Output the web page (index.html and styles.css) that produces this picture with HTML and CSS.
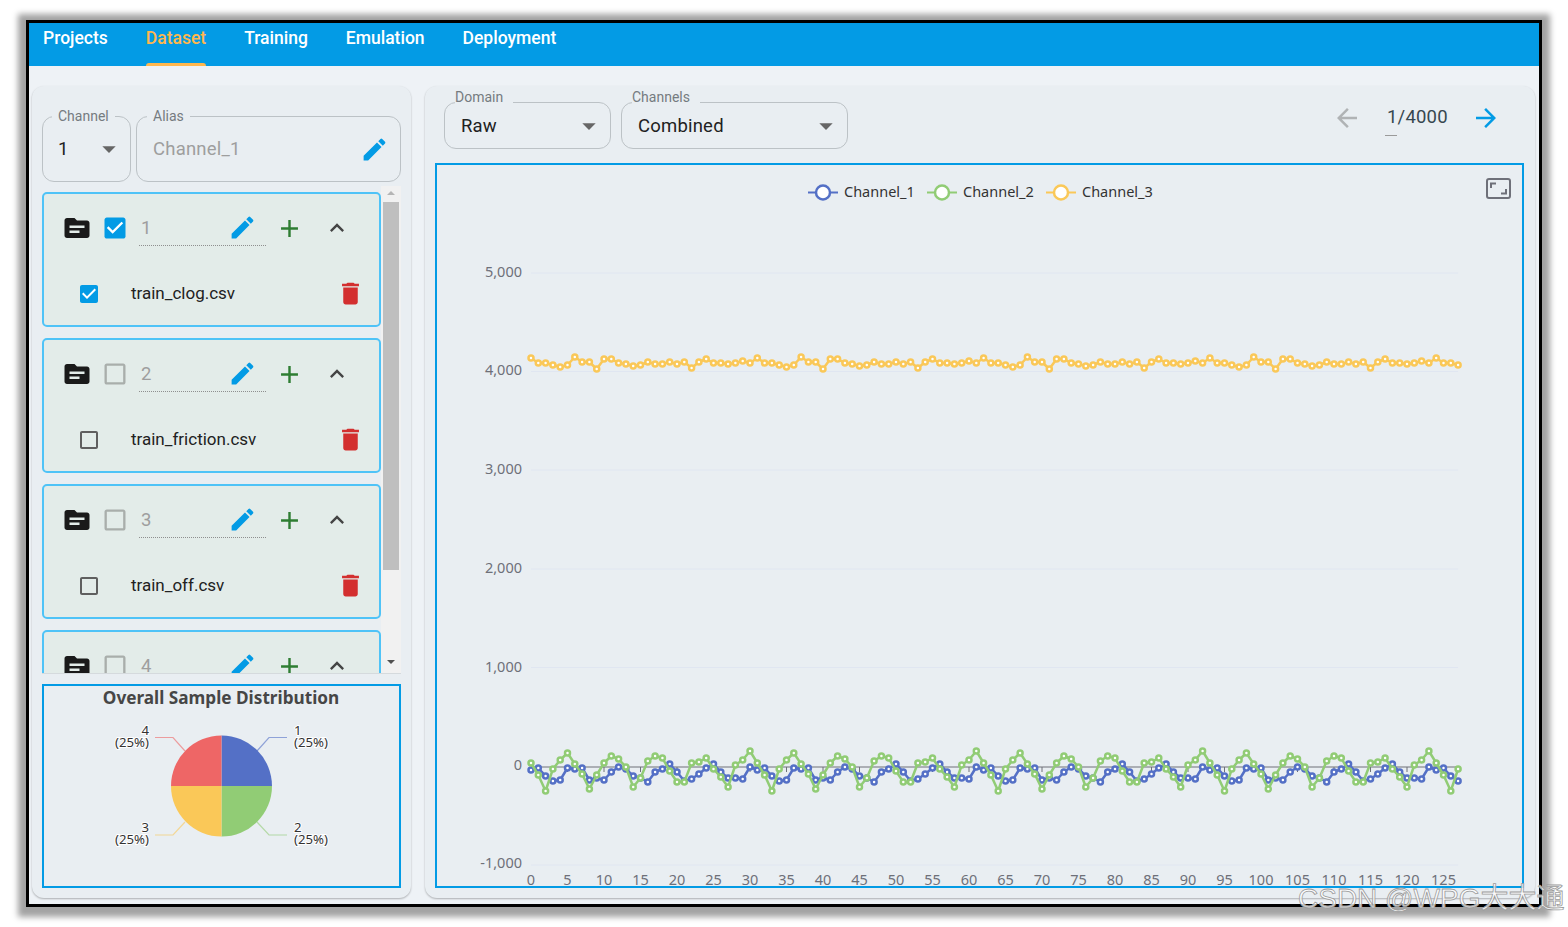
FILE: index.html
```html
<!DOCTYPE html>
<html lang="en">
<head>
<meta charset="utf-8">
<title>Dataset</title>
<link rel="stylesheet" href="styles.css">
<script src="chart.js" defer></script>
</head>
<body>
<svg class="defs" width="0" height="0" aria-hidden="true">
  <defs>
    <symbol id="i-folder" viewBox="0 0 24 24"><path d="M20 6h-8l-2-2H4c-1.1 0-1.99.9-1.99 2L2 18c0 1.1.9 2 2 2h16c1.1 0 2-.9 2-2V8c0-1.1-.9-2-2-2zm-6 10H6v-2h8v2zm4-4H6v-2h12v2z"/></symbol>
    <symbol id="i-checked" viewBox="0 0 24 24"><path d="M5 3h14c1.1 0 2 .9 2 2v14c0 1.1-.9 2-2 2H5c-1.1 0-2-.9-2-2V5c0-1.1.9-2 2-2z"/><path fill="#fff" d="M10 17l-5-5 1.41-1.41L10 14.17l7.59-7.59L19 8l-9 9z"/></symbol>
    <symbol id="i-unchecked" viewBox="0 0 24 24"><path d="M19 5v14H5V5h14m0-2H5c-1.1 0-2 .9-2 2v14c0 1.1.9 2 2 2h14c1.1 0 2-.9 2-2V5c0-1.1-.9-2-2-2z"/></symbol>
    <symbol id="i-edit" viewBox="0 0 24 24"><path d="M3 17.25V21h3.75L17.81 9.94l-3.75-3.75L3 17.25zM20.71 7.04c.39-.39.39-1.02 0-1.41l-2.34-2.34a.9959.9959 0 0 0-1.41 0l-1.83 1.83 3.75 3.75 1.83-1.83z"/></symbol>
    <symbol id="i-plus" viewBox="0 0 24 24"><path d="M19 13h-6v6h-2v-6H5v-2h6V5h2v6h6v2z"/></symbol>
    <symbol id="i-up" viewBox="0 0 24 24"><path d="M12 8l-6 6 1.41 1.41L12 10.83l4.59 4.58L18 14z"/></symbol>
    <symbol id="i-trash" viewBox="0 0 24 24"><path d="M6 19c0 1.1.9 2 2 2h8c1.1 0 2-.9 2-2V7H6v12zM19 4h-3.5l-1-1h-5l-1 1H5v2h14V4z"/></symbol>
    <symbol id="i-caret" viewBox="0 0 24 24"><path d="M7 10l5 5 5-5z"/></symbol>
    <symbol id="i-back" viewBox="0 0 24 24"><path d="M20 11H7.83l5.59-5.59L12 4l-8 8 8 8 1.41-1.41L7.83 13H20v-2z"/></symbol>
    <symbol id="i-next" viewBox="0 0 24 24"><path d="M4 11h12.17l-5.59-5.59L12 4l8 8-8 8-1.41-1.41L16.17 13H4v-2z"/></symbol>
  </defs>
</svg>

<div class="frame">
  <nav class="tabs">
    <a class="tab">Projects</a>
    <a class="tab tab-active">Dataset</a>
    <a class="tab">Training</a>
    <a class="tab">Emulation</a>
    <a class="tab">Deployment</a>
  </nav>

  <main class="main">
    <section class="panel panel-left">
      <div class="field-row">
        <fieldset class="field field-channel">
          <legend>Channel</legend>
          <span class="field-value">1</span>
          <svg class="caret"><use href="#i-caret"/></svg>
        </fieldset>
        <fieldset class="field field-alias">
          <legend>Alias</legend>
          <span class="field-value muted">Channel_1</span>
          <svg class="ico-edit"><use href="#i-edit"/></svg>
        </fieldset>
      </div>

      <div class="list-wrap">
        <div class="list">
          <article class="item">
            <div class="item-head">
              <svg class="ico-folder"><use href="#i-folder"/></svg>
              <svg class="ico-check on"><use href="#i-checked"/></svg>
              <div class="name-field"><span>1</span><svg class="ico-edit"><use href="#i-edit"/></svg></div>
              <svg class="ico-plus"><use href="#i-plus"/></svg>
              <svg class="ico-up"><use href="#i-up"/></svg>
            </div>
            <div class="item-file">
              <svg class="ico-small on"><use href="#i-checked"/></svg>
              <span class="file-name">train_clog.csv</span>
              <svg class="ico-trash"><use href="#i-trash"/></svg>
            </div>
          </article>
          <article class="item">
            <div class="item-head">
              <svg class="ico-folder"><use href="#i-folder"/></svg>
              <svg class="ico-check off"><use href="#i-unchecked"/></svg>
              <div class="name-field"><span>2</span><svg class="ico-edit"><use href="#i-edit"/></svg></div>
              <svg class="ico-plus"><use href="#i-plus"/></svg>
              <svg class="ico-up"><use href="#i-up"/></svg>
            </div>
            <div class="item-file">
              <svg class="ico-small dark"><use href="#i-unchecked"/></svg>
              <span class="file-name">train_friction.csv</span>
              <svg class="ico-trash"><use href="#i-trash"/></svg>
            </div>
          </article>
          <article class="item">
            <div class="item-head">
              <svg class="ico-folder"><use href="#i-folder"/></svg>
              <svg class="ico-check off"><use href="#i-unchecked"/></svg>
              <div class="name-field"><span>3</span><svg class="ico-edit"><use href="#i-edit"/></svg></div>
              <svg class="ico-plus"><use href="#i-plus"/></svg>
              <svg class="ico-up"><use href="#i-up"/></svg>
            </div>
            <div class="item-file">
              <svg class="ico-small dark"><use href="#i-unchecked"/></svg>
              <span class="file-name">train_off.csv</span>
              <svg class="ico-trash"><use href="#i-trash"/></svg>
            </div>
          </article>
          <article class="item">
            <div class="item-head">
              <svg class="ico-folder"><use href="#i-folder"/></svg>
              <svg class="ico-check off"><use href="#i-unchecked"/></svg>
              <div class="name-field"><span>4</span><svg class="ico-edit"><use href="#i-edit"/></svg></div>
              <svg class="ico-plus"><use href="#i-plus"/></svg>
              <svg class="ico-up"><use href="#i-up"/></svg>
            </div>
          </article>
        </div>
        <div class="scrollbar">
          <span class="sb-arrow sb-up"></span>
          <span class="sb-thumb"></span>
          <span class="sb-arrow sb-down"></span>
        </div>
      </div>

      <div class="pie-card">
        <svg class="pie" viewBox="44 686 355 200">
          <text class="pie-title" x="221" y="704" text-anchor="middle">Overall Sample Distribution</text>
          <polyline class="pie-line" stroke="#5470c6" points="257,751 269,737.5 287,737.5"/>
          <polyline class="pie-line" stroke="#91cc75" points="257,822 269,835 287,835"/>
          <polyline class="pie-line" stroke="#fac858" points="185,822 173,835 155,835"/>
          <polyline class="pie-line" stroke="#ee6666" points="185,751 173,737.5 155,737.5"/>
          <path fill="#5470c6" d="M221.5 786V735.500A50.500 50.500 0 0 1 272 786Z"/>
          <path fill="#91cc75" d="M221.500 786H272A50.500 50.500 0 0 1 221.500 836.500Z"/>
          <path fill="#fac858" d="M221.500 786V836.500A50.500 50.500 0 0 1 171 786Z"/>
          <path fill="#ee6666" d="M221.500 786H171A50.500 50.500 0 0 1 221.500 735.500Z"/>
          <g class="pie-label">
            <text x="294" y="735">1</text><text x="294" y="747">(25%)</text>
            <text x="294" y="832">2</text><text x="294" y="844">(25%)</text>
            <text x="149" y="832" text-anchor="end">3</text><text x="149" y="844" text-anchor="end">(25%)</text>
            <text x="149" y="735" text-anchor="end">4</text><text x="149" y="747" text-anchor="end">(25%)</text>
          </g>
        </svg>
      </div>
    </section>

    <section class="panel panel-right">
      <div class="toolbar">
        <fieldset class="field field-top field-domain">
          <legend>Domain</legend>
          <span class="field-value">Raw</span>
          <svg class="caret"><use href="#i-caret"/></svg>
        </fieldset>
        <fieldset class="field field-top field-channels">
          <legend>Channels</legend>
          <span class="field-value">Combined</span>
          <svg class="caret"><use href="#i-caret"/></svg>
        </fieldset>
        <div class="pager">
          <svg class="ico-arrow prev"><use href="#i-back"/></svg>
          <div class="page-count"><span>1/4000</span><i class="page-dash"></i></div>
          <svg class="ico-arrow next"><use href="#i-next"/></svg>
        </div>
      </div>
      <div class="chart-box">
        <svg id="chart" class="chart" viewBox="437 165 1085 721"></svg>
      </div>
    </section>
  </main>
</div>

<div class="watermark">CSDN @WPG大大通</div>
</body>
</html>
```

FILE: styles.css
```css
* { box-sizing: border-box; }

html, body { height: 100%; }

body {
  margin: 0;
  padding: 20px 26px;
  background: #fff;
  font-family: Roboto, "Liberation Sans", sans-serif;
  overflow: hidden;
}

.defs { position: absolute; }

svg { display: block; flex-shrink: 0; fill: currentColor; }

.frame {
  width: 1516px;
  height: 887px;
  border: 3px solid #000;
  background: #eef2f6;
  box-shadow: 0 2px 6px 8px #a3a3a3;
  display: flex;
  flex-direction: column;
}

/* top tabs */
.tabs {
  flex: 0 0 43px;
  background: #039be5;
  display: flex;
  gap: 38px;
  padding-left: 14px;
}

.tab {
  height: 43px;
  color: #fff;
  font-size: 17.500px;
  font-weight: 500;
  line-height: 30px;
  display: flex;
  flex-direction: column;
  justify-content: space-between;
}

.tab::after {
  content: "";
  height: 3px;
  border-radius: 3px 3px 0 0;
}

.tab-active { color: #ffb74d; }

.tab-active::after { background: #ffb74d; }

/* panels */
.main {
  flex: 1;
  min-height: 0;
  display: flex;
  gap: 14px;
  padding: 20px 4px 6px 3px;
}

.panel {
  background: #e9eef2;
  border-radius: 12px;
  box-shadow: 0 1px 2px rgba(0, 0, 0, .28);
  display: flex;
  flex-direction: column;
}

.panel-left {
  flex: 0 0 379px;
  padding: 22px 10px 10px;
}

.panel-right {
  flex: 1;
  min-width: 0;
  padding: 3px 11px 10px 10px;
}

/* outlined fields */
.field {
  margin: 0;
  min-width: 0;
  border: 1.5px solid #bcc2c6;
  border-radius: 12px;
  display: flex;
  align-items: center;
}

.field legend {
  font-size: 14px;
  line-height: 16px;
  color: #757b80;
  padding: 0 6px;
}

.field-value {
  font-size: 18.500px;
  letter-spacing: .2px;
  color: #212121;
}

.muted { color: #9e9e9e; }

.caret { width: 32px; height: 32px; color: #666; }

.field-row {
  display: flex;
  gap: 5px;
  height: 74px;
}

.field-channel {
  flex: 0 0 89px;
  padding: 0 5px 8px 15px;
  justify-content: space-between;
}

.field-channel legend { margin-left: -6px; }

.field-alias {
  flex: 0 0 265px;
  padding: 0 11px 7px 16px;
  justify-content: space-between;
}

.field-alias legend { margin-left: -6px; }

.ico-edit { width: 29px; height: 29px; color: #039be5; }

/* dataset list */
.list-wrap {
  flex: 0 0 488px;
  margin-top: 4px;
  min-height: 0;
  display: flex;
  justify-content: space-between;
  border-bottom: 1px solid #d5dadd;
}

.list {
  width: 339px;
  overflow: hidden;
  padding-top: 6px;
  display: flex;
  flex-direction: column;
  gap: 11px;
}

.item {
  flex: 0 0 135px;
  border: 2px solid #4fc3f7;
  border-radius: 5px;
  background: #e3ece9;
}

.item-head {
  height: 68px;
  display: flex;
  align-items: center;
  padding-left: 18px;
}

.ico-folder { width: 30px; height: 30px; color: #1a1a1a; }

.ico-check { width: 28px; height: 28px; margin-left: 9px; }

.on { color: #039be5; }
.off { color: #a9aeab; }
.dark { color: #5f5f5f; }

.name-field {
  width: 127px;
  height: 36px;
  margin-left: 10px;
  padding: 0 9px 0 2px;
  border-bottom: 1px dotted #8f8f8f;
  display: flex;
  align-items: center;
  justify-content: space-between;
  font-size: 18.500px;
  color: #9e9e9e;
}

.ico-plus { width: 29px; height: 29px; margin-left: 9px; color: #2e7d32; }

.ico-up { width: 28px; height: 28px; margin-left: 19px; color: #444; }

.item-file {
  height: 61px;
  display: flex;
  align-items: center;
  padding: 0 14px 0 33px;
}

.ico-small { width: 24px; height: 24px; margin-top: 2px; }

.file-name {
  flex: 1;
  margin-left: 30px;
  font-size: 17px;
  color: #212121;
}

.ico-trash { width: 29px; height: 29px; margin-top: 2px; color: #d32f2f; }

/* scrollbar */
.scrollbar {
  width: 20px;
  background: #f1f1f1;
  padding: 0 2px;
  display: flex;
  flex-direction: column;
  align-items: center;
}

.sb-arrow {
  width: 0;
  height: 0;
  border-left: 4px solid transparent;
  border-right: 4px solid transparent;
}

.sb-up { margin-top: 5px; border-bottom: 4px solid #b5b5b5; }

.sb-thumb {
  width: 16px;
  height: 368px;
  margin-top: 7px;
  background: #bfbfbf;
}

.sb-down { margin-top: 90px; border-top: 4px solid #505050; }

/* pie */
.pie-card {
  flex: 1;
  margin-top: 10px;
  border: 2px solid #039be5;
  min-height: 0;
}

.pie { width: 100%; height: 100%; }

.pie text { font-family: "Noto Sans", sans-serif; }

.pie-title {
  font-size: 17.200px;
  font-weight: 700;
  fill: #464646;
}

.pie-line { fill: none; stroke-width: 1.200px; opacity: .6; }

.pie-label text {
  font-size: 13.200px;
  fill: #333;
  paint-order: stroke;
  stroke: #fff;
  stroke-width: 2px;
}

/* toolbar */
.toolbar {
  flex: 0 0 74px;
  display: flex;
  align-items: flex-start;
  gap: 10px;
  padding-left: 9px;
}

.field-top {
  height: 60px;
  align-items: center;
  justify-content: space-between;
  padding: 0 5px 12px 16px;
}

.field-top legend {
  padding: 0 10px 10px 0;
  margin-left: -6px;
}

.field-domain { flex: 0 0 167px; }
.field-channels { flex: 0 0 227px; }

.pager {
  margin-left: auto;
  margin-top: 14px;
  padding-right: 23px;
  display: flex;
  align-items: flex-start;
}

.ico-arrow { width: 30px; height: 30px; }
.prev { color: #b0b3b5; }
.next { color: #039be5; }

.page-count {
  width: 64px;
  margin: 0 22px 0 23px;
  font-size: 18.500px;
  letter-spacing: .2px;
  line-height: 28px;
  color: #37474f;
  padding-left: 2px;
}

.page-dash {
  display: block;
  width: 12px;
  height: 1px;
  margin: 4px 0 0 -2px;
  background: #9a9a9a;
}

/* chart */
.chart-box {
  flex: 1;
  min-height: 0;
  border: 2px solid #039be5;
}

.chart { width: 100%; height: 100%; overflow: visible; }

.chart text {
  font-family: "Noto Sans", sans-serif;
  font-size: 14.500px;
  fill: #6e7079;
}

.chart .legend-text { fill: #333; }

.grid-line { stroke: #e0e6f1; stroke-width: 1; }
.axis-line { stroke: #6e7079; stroke-width: 1; }
.series { fill: none; stroke-width: 2.500; stroke-linejoin: round; }
.dot { fill: #fff; stroke-width: 2.500; }
.tool { fill: none; stroke: #6e7079; stroke-width: 2; }

/* watermark */
.watermark {
  position: absolute;
  left: 1298px;
  top: 881px;
  font-family: "Liberation Sans", "Noto Sans CJK SC", sans-serif;
  font-size: 28px;
  line-height: 36px;
  white-space: nowrap;
  color: rgba(255, 255, 255, .8);
  -webkit-text-stroke: .8px #9a9a9a;
}
```

FILE: chart.js
```js
// Samples repeat every 31 points; values are chart pixel rows.
const SERIES = [
  { name: 'Channel_1', color: '#5470c6', legendX: 808, rows: [770,768,776,781,780,768,769,768,780,778,780,772,767,769,776,778,782,772,769,764,772,781,779,774,768,764,772,778,778,779,767] },
  { name: 'Channel_2', color: '#91cc75', legendX: 927, rows: [763,775,791,769,760,753,764,774,789,775,763,756,759,767,787,778,761,756,758,771,782,782,763,762,758,769,777,787,765,760,751] },
  { name: 'Channel_3', color: '#fac858', legendX: 1046, rows: [358,363,363,365,367,365,357,362,362,369,359,359,363,364,366,365,362,364,364,362,364,362,368,362,359,363,363,364,363,361,363] }
];

const NS = 'http://www.w3.org/2000/svg';
const chart = document.getElementById('chart');

function add(tag, attrs, text) {
  const el = document.createElementNS(NS, tag);
  Object.entries(attrs).forEach(([k, v]) => el.setAttribute(k, v));
  if (text !== undefined) el.textContent = text;
  chart.appendChild(el);
  return el;
}

const xAt = i => 531 + i * 7.3;
const X_END = xAt(127);

[[5000, 273, 272], [4000, 371.500, 370], [3000, 470, 469], [2000, 569, 568], [1000, 667.500, 667], [-1000, 865, 863]].forEach(([v, y, label]) => {
  add('line', { class: 'grid-line', x1: 531, x2: X_END, y1: y, y2: y });
  add('text', { x: 522, y: label + 5, 'text-anchor': 'end' }, v.toLocaleString('en-US'));
});
add('text', { x: 522, y: 770, 'text-anchor': 'end' }, '0');

add('line', { class: 'axis-line', x1: 531, x2: X_END, y1: 767, y2: 767 });
for (let i = 0; i <= 125; i += 5) {
  add('line', { class: 'axis-line', x1: xAt(i), x2: xAt(i), y1: 767, y2: 772 });
  add('text', { x: xAt(i), y: 885, 'text-anchor': 'middle' }, String(i));
}

SERIES.forEach(s => {
  const pts = [];
  for (let i = 0; i < 128; i++) pts.push([xAt(i), s.rows[i % 31]]);
  add('polyline', { class: 'series', stroke: s.color, points: pts.map(p => p.join(',')).join(' ') });
  pts.forEach(p => add('circle', { class: 'dot', stroke: s.color, cx: p[0], cy: p[1], r: 2.500 }));

  add('line', { stroke: s.color, 'stroke-width': 2, x1: s.legendX, x2: s.legendX + 30, y1: 192.500, y2: 192.500 });
  add('circle', { class: 'dot', stroke: s.color, cx: s.legendX + 15, cy: 192.500, r: 7 });
  add('text', { class: 'legend-text', x: s.legendX + 36, y: 197 }, s.name);
});

add('rect', { class: 'tool', x: 1487, y: 179, width: 23, height: 19, rx: 2 });
add('path', { class: 'tool', d: 'M1491 188v-4.500h5M1506 189v4.500h-5' });
```
